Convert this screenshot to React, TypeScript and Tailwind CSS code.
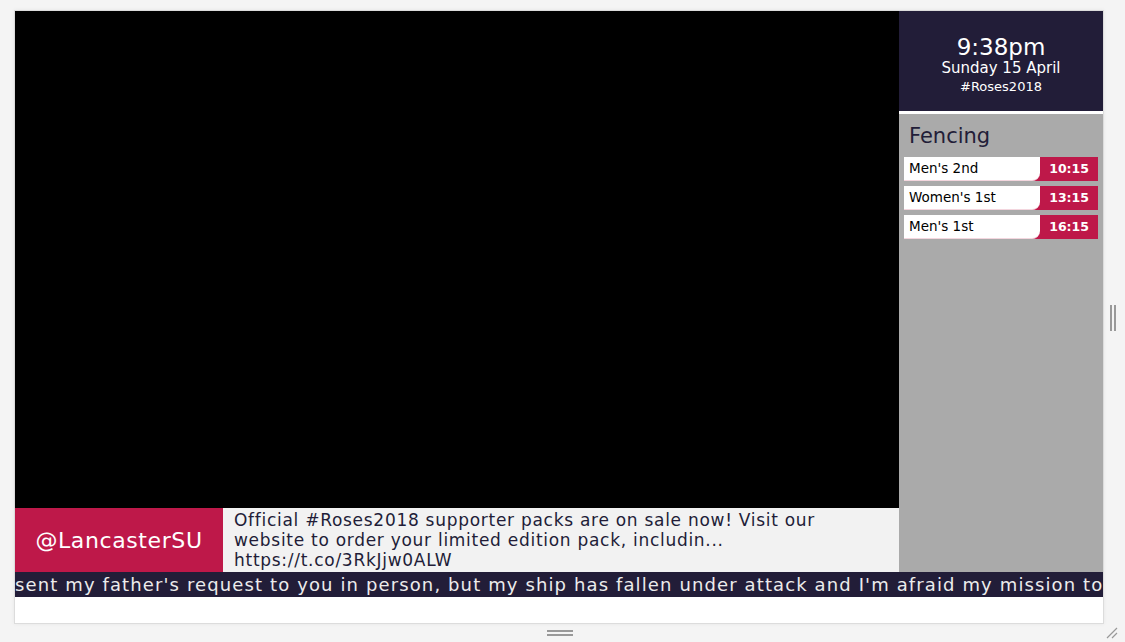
import React from "react";

const fixtures = [
  { name: "Men's 2nd", time: "10:15" },
  { name: "Women's 1st", time: "13:15" },
  { name: "Men's 1st", time: "16:15" },
];

export default function App() {
  return (
    <div
      className="relative w-[1125px] h-[642px] bg-[#f4f4f4] pt-[10px] pl-[14px] overflow-hidden"
      style={{ fontFamily: '"DejaVu Sans", sans-serif' }}
    >
      <div className="w-[1090px] h-[614px] border border-[#dcdcdc] bg-white flex flex-col shadow-[0_0_4px_rgba(0,0,0,0.06)]">
        <div className="flex h-[561px]">
          {/* left: video + tweet */}
          <div className="w-[884px] flex flex-col">
            <div className="h-[497px] bg-black" />
            <div className="h-[64px] flex bg-[#f2f2f2]">
              <div className="w-[208px] bg-[#be1849] flex items-center justify-center text-white text-[22px] tracking-[0.6px] pt-[1px]">
                @LancasterSU
              </div>
              <p className="flex-1 pl-[11px] pr-4 pt-[2px] text-[#221d38] text-[17px] leading-[20px] tracking-[0.72px]">
                Official #Roses2018 supporter packs are on sale now! Visit our
                <br />
                website to order your limited edition pack, includin...
                <br />
                https://t.co/3RkJjw0ALW
              </p>
            </div>
          </div>

          {/* right: sidebar */}
          <div className="w-[204px] flex flex-col bg-[#aaaaaa]">
            <div className="h-[100px] bg-[#221d38] text-white flex flex-col items-center pt-[24px]">
              <div className="text-[23px] leading-[25px]">9:38pm</div>
              <div className="text-[15px] leading-[17px]">Sunday 15 April</div>
              <div className="text-[13px] leading-[16px] mt-[2px]">#Roses2018</div>
            </div>
            <div className="h-[3px] bg-white" />
            <div className="px-[5px] pt-[10px]">
              <h2 className="text-[21px] leading-[24px] text-[#221d38] pl-[5px] mb-[9px]">Fencing</h2>
              <div className="flex flex-col gap-[5px]">
                {fixtures.map((f) => (
                  <div key={f.name} className="flex h-[24px] bg-[#be1849]">
                    <div className="w-[136px] bg-white rounded-br-[8px] border-b border-[#f3d6de] flex items-center pl-[5px] text-[13.5px] text-black">
                      {f.name}
                    </div>
                    <div className="flex-1 flex items-center justify-end pr-[9px] text-white font-bold text-[12.5px]">
                      {f.time}
                    </div>
                  </div>
                ))}
              </div>
            </div>
          </div>
        </div>

        {/* ticker */}
        <div className="h-[25px] bg-[#221d38] text-[#ececec] text-[18px] leading-[25px] tracking-[1.12px] whitespace-nowrap overflow-hidden">
          sent my father's request to you in person, but my ship has fallen under attack and I'm afraid my mission to
        </div>
        <div className="flex-1 bg-white" />
      </div>

      {/* resize handles */}
      <div className="absolute left-[1110px] top-[305px] flex gap-[2px]">
        <div className="w-[2px] h-[26px] bg-[#999]" />
        <div className="w-[2px] h-[26px] bg-[#999]" />
      </div>
      <div className="absolute left-[547px] top-[630px] flex flex-col gap-[2px]">
        <div className="w-[26px] h-[2px] bg-[#999]" />
        <div className="w-[26px] h-[2px] bg-[#999]" />
      </div>
      <svg className="absolute left-[1106px] top-[627px]" width="12" height="12" viewBox="0 0 12 12">
        <path d="M1 11 L11 1 M6 11 L11 6" stroke="#999" strokeWidth="1.2" />
      </svg>
    </div>
  );
}
